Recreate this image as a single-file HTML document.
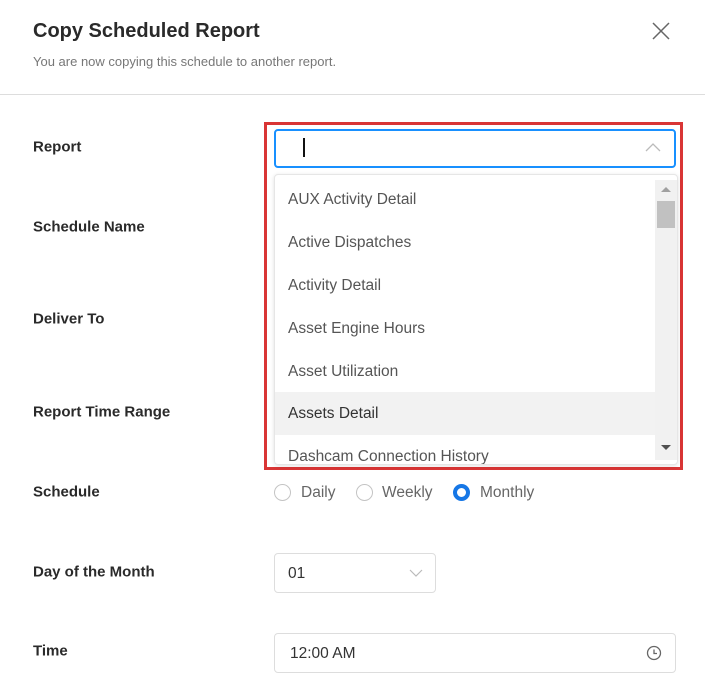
<!DOCTYPE html>
<html><head><style>
body{margin:0;width:705px;height:693px;background:#fff;font-family:"Liberation Sans",sans-serif;position:relative;overflow:hidden;color:#262626}
.a{position:absolute}
.lbl{position:absolute;left:33px;font-size:15px;font-weight:bold;color:#2a2a2a;transform:translateY(-50%)}
.it{position:absolute;left:0;width:381px;height:43px;line-height:43px;padding-left:13px;font-size:15.5px;color:#555;box-sizing:border-box}
.rad{position:absolute;width:15px;height:15px;border:1px solid #c4c4c4;border-radius:50%;top:484px}
.rt{position:absolute;top:484px;font-size:15.5px;color:#666;line-height:17px}
</style></head><body>
<div class="a" style="left:33px;top:20px;font-size:20px;font-weight:bold;color:#2a2a2a">Copy Scheduled Report</div>
<div class="a" style="left:33px;top:54px;font-size:13px;color:#777">You are now copying this schedule to another report.</div>
<svg class="a" style="left:651px;top:21px" width="20" height="20"><path d="M2 2L18 18M18 2L2 18" stroke="#666" stroke-width="1.5"/></svg>
<div class="a" style="left:0;top:94px;width:705px;height:1px;background:#ddd"></div>

<div class="lbl" style="top:147px">Report</div>
<div class="lbl" style="top:227px">Schedule Name</div>
<div class="lbl" style="top:319px">Deliver To</div>
<div class="lbl" style="top:412px">Report Time Range</div>
<div class="lbl" style="top:492px">Schedule</div>
<div class="lbl" style="top:572px">Day of the Month</div>
<div class="lbl" style="top:651px">Time</div>

<div class="a" style="left:264px;top:122px;width:413px;height:342px;border:3px solid #d93535"></div>
<div class="a" style="left:274px;top:129px;width:398px;height:35px;border:2px solid #1890ff;border-radius:4px"></div>
<div class="a" style="left:303px;top:138px;width:1.5px;height:19px;background:#111"></div>
<svg class="a" style="left:645px;top:142px" width="16" height="10"><path d="M1 9L8 2L15 9" stroke="#bbb" stroke-width="1.3" fill="none"/></svg>

<div class="a" style="left:274px;top:174px;width:402px;height:289px;border:1px solid #e6e6e6;border-radius:4px;box-shadow:0 1px 4px rgba(0,0,0,.12);overflow:hidden;background:#fff">
 <div class="it" style="top:3px">AUX Activity Detail</div>
 <div class="it" style="top:46px">Active Dispatches</div>
 <div class="it" style="top:89px">Activity Detail</div>
 <div class="it" style="top:132px">Asset Engine Hours</div>
 <div class="it" style="top:175px">Asset Utilization</div>
 <div class="it" style="top:217px;background:#f2f2f2;color:#333">Assets Detail</div>
 <div class="it" style="top:260px">Dashcam Connection History</div>
 <div class="a" style="left:380px;top:5px;width:22px;height:280px;background:#f1f1f1"></div>
 <svg class="a" style="left:385px;top:10px" width="12" height="8"><path d="M1 7L6 2L11 7Z" fill="#a0a0a0"/></svg>
 <div class="a" style="left:382px;top:26px;width:18px;height:27px;background:#c1c1c1"></div>
 <svg class="a" style="left:385px;top:269px" width="12" height="8"><path d="M1 1L6 6L11 1Z" fill="#505050"/></svg>
</div>

<div class="rad" style="left:274px"></div><div class="rt" style="left:301px">Daily</div>
<div class="rad" style="left:356px"></div><div class="rt" style="left:382px">Weekly</div>
<div class="rad" style="left:453px;width:9px;height:9px;border:4px solid #1677e6"></div><div class="rt" style="left:480px">Monthly</div>

<div class="a" style="left:274px;top:553px;width:160px;height:38px;border:1px solid #ddd;border-radius:4px"></div>
<div class="a" style="left:288px;top:565px;font-size:15.5px;color:#333">01</div>
<svg class="a" style="left:409px;top:569px" width="14" height="8"><path d="M1 1L7 7L13 1" stroke="#bbb" stroke-width="1.2" fill="none"/></svg>

<div class="a" style="left:274px;top:633px;width:400px;height:38px;border:1px solid #ddd;border-radius:4px"></div>
<div class="a" style="left:290px;top:645px;font-size:15.5px;color:#333">12:00 AM</div>
<svg class="a" style="left:646px;top:645px" width="16" height="16"><circle cx="8" cy="8" r="6.5" stroke="#666" stroke-width="1.3" fill="none"/><path d="M8 4.5V8.5H11" stroke="#666" stroke-width="1.3" fill="none"/></svg>
</body></html>
